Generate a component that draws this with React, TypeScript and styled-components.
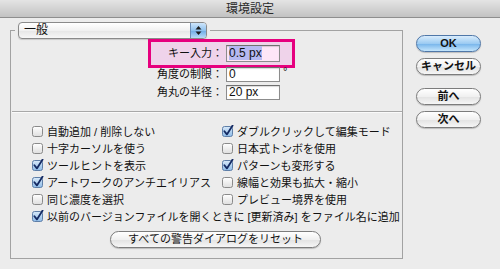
import React from "react";
import styled, { createGlobalStyle } from "styled-components";

const GlobalStyle = createGlobalStyle`
  html, body {
    margin: 0;
    padding: 0;
    background: #ececec;
  }
  body {
    font-family: "Liberation Sans", "Noto Sans CJK JP", sans-serif;
    color: #111;
  }
`;

const Window = styled.div`
  width: 500px;
  height: 269px;
  overflow: hidden;
  background: #ececec;
`;

const TitleBar = styled.div`
  height: 17px;
  border-bottom: 1px solid #8e8e8e;
  background: linear-gradient(#e4e4e4, #c2c2c2);
  display: flex;
  align-items: center;
  justify-content: center;
  font-size: 12px;
  color: #2a2a2a;
  line-height: 1;
`;

const Body = styled.div`
  display: flex;
  align-items: flex-start;
`;

const Group = styled.fieldset`
  margin: 4px 0 0 10px;
  padding: 0 0 10px 0;
  width: 393px;
  box-sizing: border-box;
  border: 1px solid #a2a2a2;
  min-width: 0;
`;

const Legend = styled.legend`
  margin-left: 4px;
  padding: 0 3px;
  line-height: 0;
`;

const Popup = styled.div`
  width: 189px;
  height: 17px;
  box-sizing: border-box;
  border: 1px solid #8a8a8a;
  border-radius: 4px;
  background: linear-gradient(#ffffff, #f1f1f1 50%, #e6e6e6 51%, #f7f7f7);
  display: flex;
  align-items: center;
  overflow: hidden;
  box-shadow: 0 1px 1px rgba(0, 0, 0, 0.15);
`;

const PopupText = styled.span`
  flex: 1;
  padding-left: 5px;
  font-size: 12px;
  line-height: 15px;
`;

const Stepper = styled.span`
  width: 15px;
  height: 15px;
  border-left: 1px solid #6d8db5;
  background: linear-gradient(#cfe6fb, #8fc1ee 50%, #6daae6 51%, #b9dcf8);
  display: flex;
  align-items: center;
  justify-content: center;
`;

const Fields = styled.div`
  margin-left: 137px;
  display: flex;
  flex-direction: column;
`;

const FieldRow = styled.div<{ $highlight?: boolean }>`
  display: flex;
  align-items: ${(p) => (p.$highlight ? "center" : "flex-start")};
  width: 147px;
  box-sizing: border-box;
  padding: ${(p) => (p.$highlight ? "0" : "0 3px")};
  height: ${(p) => (p.$highlight ? "29px" : "18px")};
  border: ${(p) => (p.$highlight ? "3px solid #e6007e" : "none")};
  background: ${(p) => (p.$highlight ? "#efd3ea" : "transparent")};
  margin-bottom: ${(p) => (p.$highlight ? "-1px" : "0")};
`;

const FieldLabel = styled.span`
  width: 72px;
  text-align: right;
  font-size: 11px;
  line-height: 15px;
  white-space: nowrap;
`;

const Field = styled.div<{ $tint?: boolean }>`
  margin-left: 3px;
  width: 54px;
  height: ${(p) => (p.$tint ? "17px" : "15px")};
  box-sizing: border-box;
  border: 1px solid #8c8c8c;
  border-top-color: #6f6f6f;
  background: ${(p) => (p.$tint ? "#fde6f7" : "#ffffff")};
  box-shadow: inset 0 1px 1px rgba(0, 0, 0, 0.15);
  padding: 0 2px;
  font-size: 12px;
  line-height: ${(p) => (p.$tint ? "15px" : "13px")};
  white-space: nowrap;
`;

const Selected = styled.span`
  background: #b6b9f1;
`;

const Unit = styled.span`
  margin-left: 3px;
  font-size: 11px;
  line-height: 9px;
`;

const Separator = styled.div`
  margin: 8px 0 0 1px;
  height: 1px;
  background: #a8a8a8;
  border-bottom: 1px solid #fafafa;
`;

const Options = styled.div`
  margin: 9px 0 0 21px;
  display: grid;
  grid-template-columns: 190px 1fr;
  grid-auto-rows: 17px;
`;

const Option = styled.label<{ $wide?: boolean }>`
  display: flex;
  align-items: center;
  gap: 3px;
  font-size: 11px;
  white-space: nowrap;
  grid-column: ${(p) => (p.$wide ? "1 / span 2" : "auto")};
`;

const ResetButton = styled.div`
  margin: 7px 0 0 99px;
  width: 211px;
  height: 17px;
  box-sizing: border-box;
  border: 1px solid #7c7c7c;
  border-radius: 9px;
  background: linear-gradient(#ffffff, #f0f0f0 50%, #e2e2e2 51%, #f6f6f6);
  box-shadow: 0 1px 1px rgba(0, 0, 0, 0.2);
  display: flex;
  align-items: center;
  justify-content: center;
  font-size: 11px;
  line-height: 1;
`;

const ButtonColumn = styled.div`
  margin: 17px 0 0 13px;
  display: flex;
  flex-direction: column;
`;

const PushButton = styled.div<{ $primary?: boolean; $gap: number }>`
  margin-top: ${(p) => p.$gap}px;
  width: 65px;
  height: 17px;
  box-sizing: border-box;
  border: 1px solid ${(p) => (p.$primary ? "#4f77a8" : "#7c7c7c")};
  border-radius: 9px;
  background: ${(p) =>
    p.$primary
      ? "linear-gradient(#d9ecfc, #9ccbf2 50%, #74b3ea 51%, #c4e5fc)"
      : "linear-gradient(#ffffff, #f0f0f0 50%, #e2e2e2 51%, #f6f6f6)"};
  box-shadow: 0 1px 1px rgba(0, 0, 0, 0.2);
  display: flex;
  align-items: center;
  justify-content: center;
  font-size: 11px;
  font-weight: bold;
  line-height: 1;
`;

const CheckBox = ({ checked }: { checked?: boolean }) => (
  <svg width="12" height="12" viewBox="0 0 12 12" style={{ flex: "none" }}>
    <defs>
      <linearGradient id="cbOff" x1="0" y1="0" x2="0" y2="1">
        <stop offset="0" stopColor="#ffffff" />
        <stop offset="1" stopColor="#dedede" />
      </linearGradient>
      <linearGradient id="cbOn" x1="0" y1="0" x2="0" y2="1">
        <stop offset="0" stopColor="#d8e9f9" />
        <stop offset="1" stopColor="#8dbbe8" />
      </linearGradient>
    </defs>
    <rect
      x="0.5"
      y="1.5"
      width="10"
      height="10"
      rx="2"
      fill={checked ? "url(#cbOn)" : "url(#cbOff)"}
      stroke={checked ? "#5f7fa8" : "#8a8a8a"}
    />
    {checked && (
      <path
        d="M2.4 6.2 L4.9 9.4 L10.6 0.6"
        fill="none"
        stroke="#142a63"
        strokeWidth="1.8"
        strokeLinecap="round"
        strokeLinejoin="round"
      />
    )}
  </svg>
);

const options: { label: string; checked: boolean; wide?: boolean }[] = [
  { label: "自動追加 / 削除しない", checked: false },
  { label: "ダブルクリックして編集モード", checked: true },
  { label: "十字カーソルを使う", checked: false },
  { label: "日本式トンボを使用", checked: false },
  { label: "ツールヒントを表示", checked: true },
  { label: "パターンも変形する", checked: true },
  { label: "アートワークのアンチエイリアス", checked: true },
  { label: "線幅と効果も拡大・縮小", checked: false },
  { label: "同じ濃度を選択", checked: false },
  { label: "プレビュー境界を使用", checked: false },
  { label: "以前のバージョンファイルを開くときに [更新済み] をファイル名に追加", checked: true, wide: true },
];

export default function App() {
  return (
    <Window>
      <GlobalStyle />
      <TitleBar>環境設定</TitleBar>
      <Body>
        <Group>
          <Legend>
            <Popup>
              <PopupText>一般</PopupText>
              <Stepper>
                <svg width="7" height="11" viewBox="0 0 7 11">
                  <path d="M3.5 1 L6.5 4.5 L0.5 4.5 Z" fill="#1c1c1c" />
                  <path d="M3.5 10 L6.5 6.5 L0.5 6.5 Z" fill="#1c1c1c" />
                </svg>
              </Stepper>
            </Popup>
          </Legend>
          <Fields>
            <FieldRow $highlight>
              <FieldLabel>キー入力：</FieldLabel>
              <Field $tint>
                <Selected>0.5 px</Selected>
              </Field>
            </FieldRow>
            <FieldRow>
              <FieldLabel>角度の制限：</FieldLabel>
              <Field>0</Field>
              <Unit>°</Unit>
            </FieldRow>
            <FieldRow>
              <FieldLabel>角丸の半径：</FieldLabel>
              <Field>20 px</Field>
            </FieldRow>
          </Fields>
          <Separator />
          <Options>
            {options.map((o) => (
              <Option key={o.label} $wide={o.wide}>
                <CheckBox checked={o.checked} />
                {o.label}
              </Option>
            ))}
          </Options>
          <ResetButton>すべての警告ダイアログをリセット</ResetButton>
        </Group>
        <ButtonColumn>
          <PushButton $primary $gap={0}>OK</PushButton>
          <PushButton $gap={6}>キャンセル</PushButton>
          <PushButton $gap={13}>前へ</PushButton>
          <PushButton $gap={6}>次へ</PushButton>
        </ButtonColumn>
      </Body>
    </Window>
  );
}
